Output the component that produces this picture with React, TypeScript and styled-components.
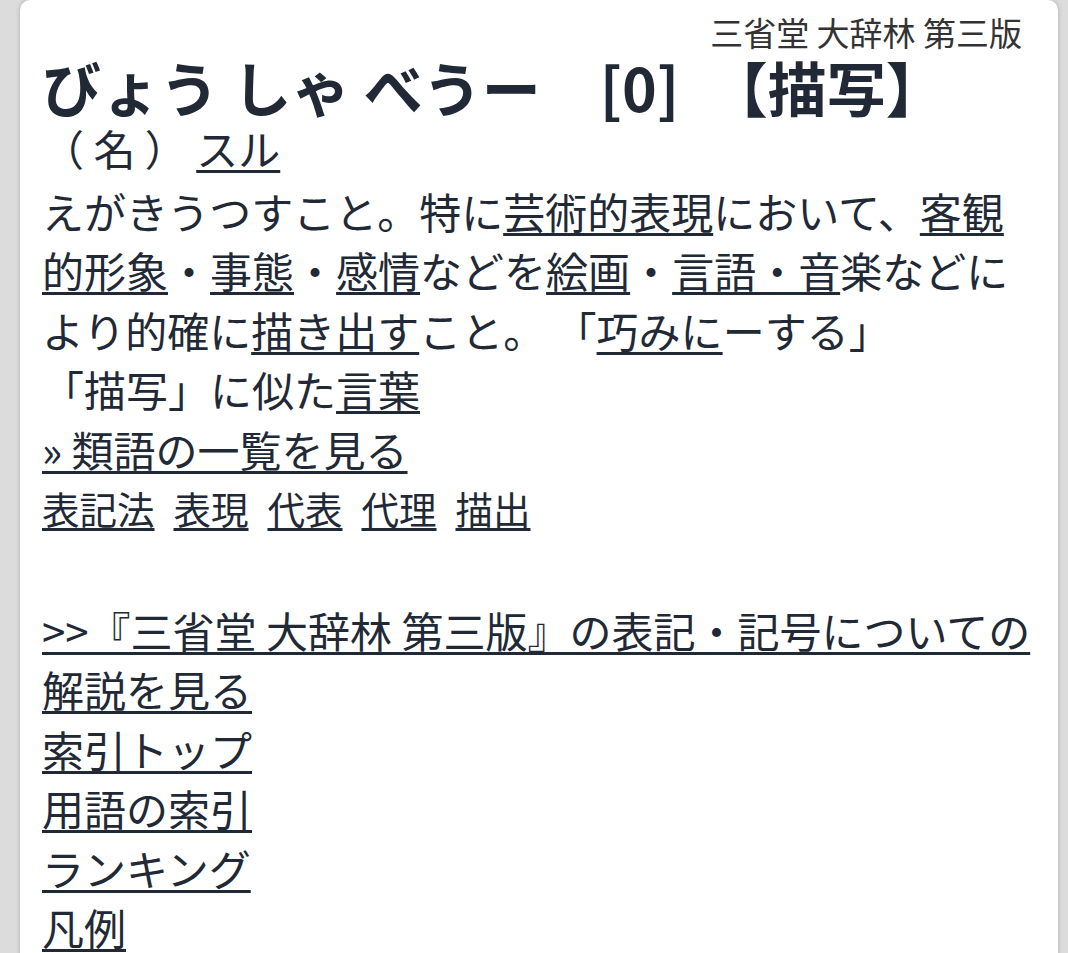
import styled, { createGlobalStyle } from 'styled-components';

const GlobalStyle = createGlobalStyle`
  html, body {
    margin: 0;
    padding: 0;
    background: #dcdcdc;
  }
  body {
    font-family: "Noto Sans CJK JP", "Noto Sans", sans-serif;
    color: #222936;
  }
`;

const Page = styled.div`
  padding: 0 10px 0 20px;
`;

const Card = styled.div`
  background: #ffffff;
  border-radius: 10px 10px 0 0;
  box-shadow: 0 0 5px rgba(0, 0, 0, 0.22);
  padding: 10px 22px 60px;
  min-height: 953px;
  box-sizing: border-box;
`;

const Source = styled.div`
  text-align: right;
  font-size: 33px;
  line-height: 44px;
  color: #333333;
  padding-right: 14px;
`;

const Headword = styled.h1`
  margin: 2px 0 0;
  font-size: 59px;
  line-height: 62px;
  font-weight: 700;
  white-space: pre;
`;

const Body = styled.div`
  font-size: 42px;
  line-height: 59.5px;
`;

const Line = styled.div<{ $gap?: number }>`
  margin-top: ${p => p.$gap || 0}px;
`;

const Link = styled.a`
  color: inherit;
  text-decoration: underline;
  text-decoration-thickness: 3px;
  text-underline-offset: 4px;
`;

const BlockLink = styled(Link)`
  display: table;
`;

const ChipRow = styled.div`
  display: flex;
  gap: 19px;
  font-size: 37.5px;
`;

export default function App() {
  const similar = ['表記法', '表現', '代表', '代理', '描出'];
  const nav = ['索引トップ', '用語の索引', 'ランキング', '凡例'];

  return (
    <>
      <GlobalStyle />
      <Page>
        <Card>
          <Source>三省堂 大辞林 第三版</Source>
          <Headword>{'びょう しゃ べうー　[0]　【描写】'}</Headword>
          <Body>
            <Line>（ 名 ） <Link>スル</Link></Line>
            <Line $gap={3}>
              えがきうつすこと。特に<Link>芸術的表現</Link>において、<Link>客観的形象</Link>・<Link>事態</Link>・<Link>感情</Link>などを<Link>絵画</Link>・<Link>言語・音</Link>楽などにより的確に<Link>描き出す</Link>こと。 「<Link>巧みに</Link>ーする」
            </Line>
            <Line>「描写」に似た<Link>言葉</Link></Line>
            <BlockLink>» 類語の一覧を見る</BlockLink>
            <ChipRow>
              {similar.map(word => (
                <Link key={word}>{word}</Link>
              ))}
            </ChipRow>
            <Line $gap={62}>
              <Link>{'>>『三省堂 大辞林 第三版』の表記・記号についての解説を見る'}</Link>
            </Line>
            {nav.map(item => (
              <BlockLink key={item}>{item}</BlockLink>
            ))}
          </Body>
        </Card>
      </Page>
    </>
  );
}
